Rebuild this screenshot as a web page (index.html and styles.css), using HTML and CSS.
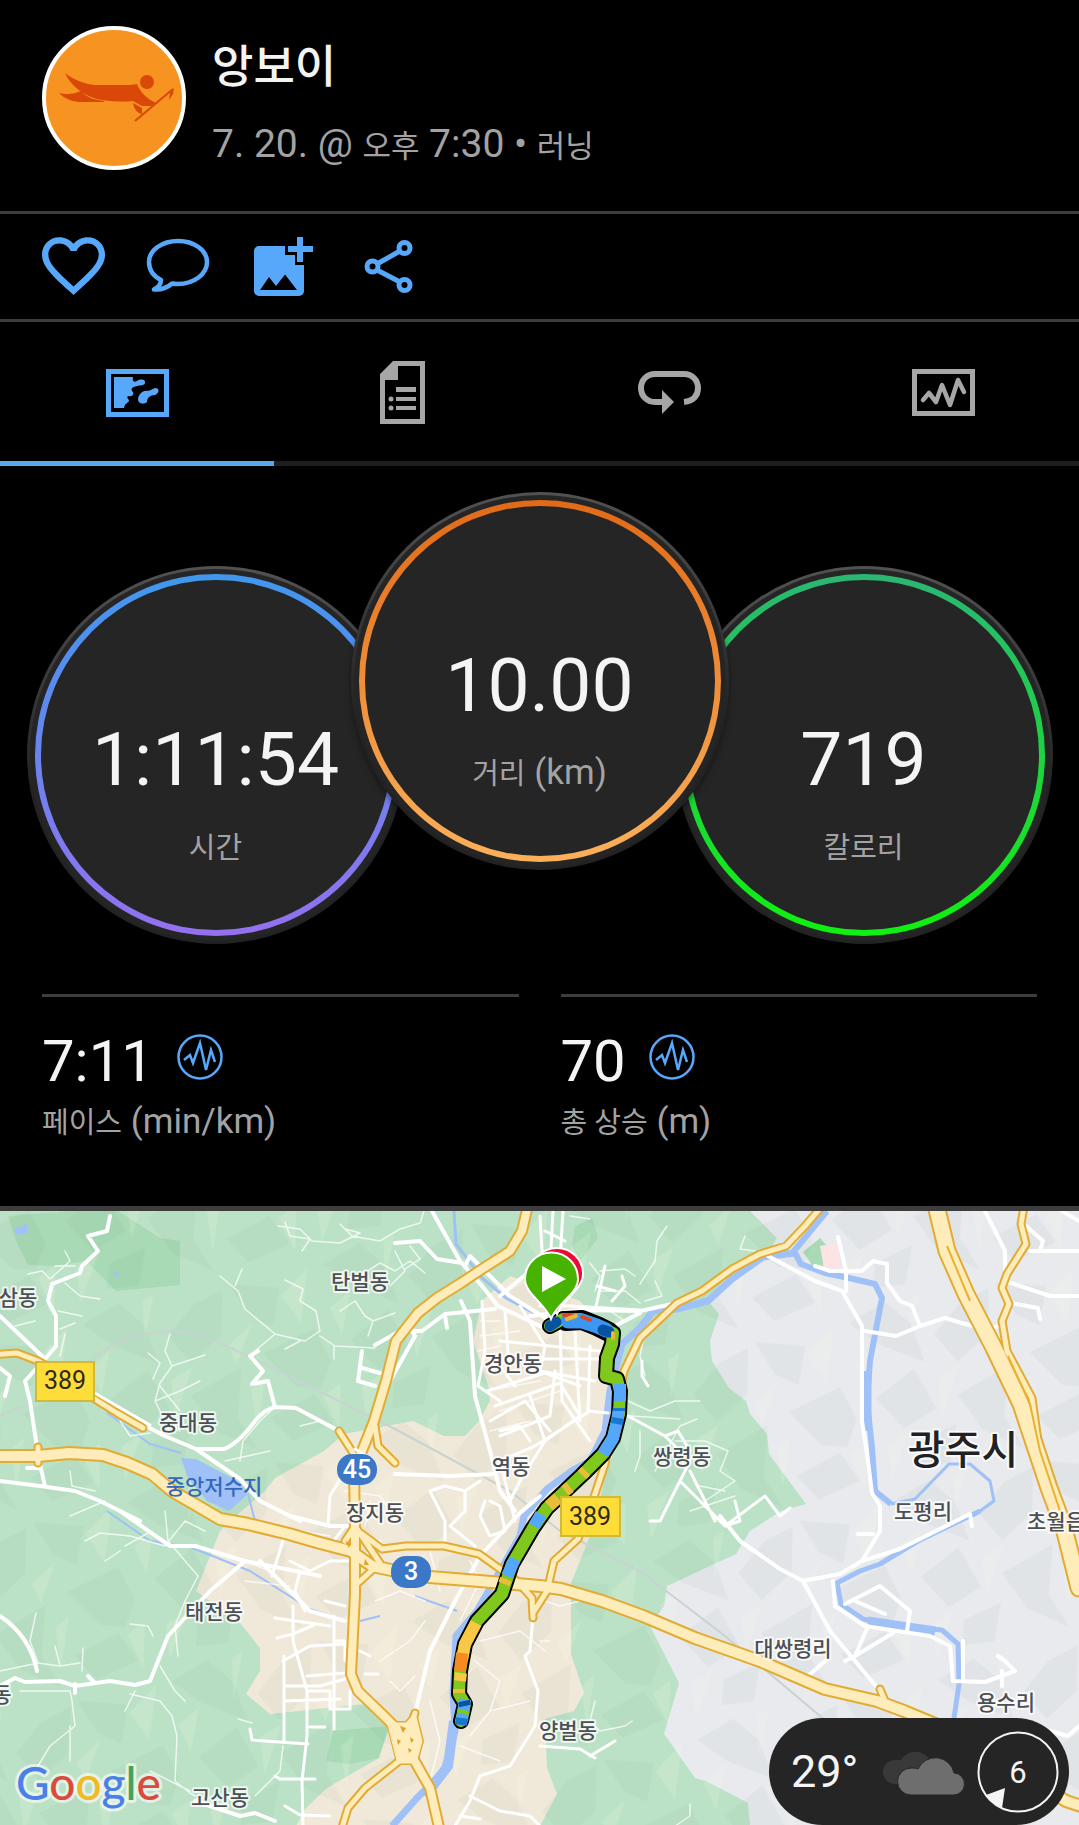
FILE: index.html
```html
<!DOCTYPE html>
<html lang="ko">
	<head>
		<meta charset="utf-8">
		<meta name="viewport" content="width=device-width, initial-scale=1">
		<title>앙보이 - 러닝</title>
		<link rel="stylesheet" href="styles.css">
	</head>
	<body>
		<!-- 사용자 정보 -->
		<header class="profile">
			<svg class="avatar" viewBox="0 0 144 144" aria-hidden="true">
				<circle cx="72" cy="72" r="70" fill="#f79421" stroke="#fff" stroke-width="4"/>
				<g fill="#d94808">
					<path d="M23 47C32 54 42 58 53 59H88L95 58C98 66 105 73 114 77L109 80H100L91 75C80 76 62 76 49 71C37 66 28 58 23 47z"/>
					<path d="M17 67C25 69 32 68 39 65C44 71 52 74 62 75V76H37C28 75 22 72 17 67z"/>
					<circle cx="105" cy="56" r="7"/>
					<path d="M91 77L100 82V88C95 87 92 83 91 77z"/>
					<path d="M128 67l4-5-1 6-4 6z"/>
				</g>
				<path d="M93 95L131 63" stroke="#d94808" stroke-width="2"/>
			</svg>
			<div class="profile-text">
				<h1>앙보이</h1>
				<p>7. 20. @ <span>오후</span> 7:30 • <span>러닝</span></p>
			</div>
		</header>

		<!-- 버튼 목록 -->
		<div class="actions">
			<button type="button" aria-label="좋아요">
				<svg viewBox="2 2 20.3 20.3"><path fill="currentColor" d="M16.5 3c-1.74 0-3.41.81-4.5 2.09C10.91 3.81 9.24 3 7.5 3 4.42 3 2 5.42 2 8.5c0 3.78 3.4 6.86 8.55 11.54L12 21.35l1.45-1.32C18.6 15.36 22 12.28 22 8.5 22 5.42 19.58 3 16.5 3zm-4.4 15.55l-.1.1-.1-.1C7.14 14.24 4 11.39 4 8.5 4 6.5 5.5 5 7.5 5c1.54 0 3.04.99 3.57 2.36h1.87C13.46 5.99 14.96 5 16.5 5c2 0 3.5 1.5 3.5 3.5 0 2.89-3.14 5.74-7.9 10.05z"/></svg>
			</button>
			<button type="button" aria-label="댓글">
				<svg viewBox="0 0 64 64"><path fill="none" stroke="currentColor" stroke-width="4.5" stroke-linejoin="round" d="M13 46C5 42 1 36 1 28C1 16 14 7 30 7S59 16 59 28S46 50 30 50c-2 0-4 0-6-.5C19 54 13 56 6 55.5C10 53 13 51 13 46z"/></svg>
			</button>
			<button type="button" aria-label="사진 추가">
				<svg viewBox="0 0 64 64" fill="currentColor">
					<path fill-rule="evenodd" d="M5 12H31V21H41V31H50V57a5 5 0 0 1-5 5H5a5 5 0 0 1-5-5V17a5 5 0 0 1 5-5zM6 56H43L31 40.5L22 52L15 43z"/>
					<path d="M43 3h6v9h10v6H49v10h-6V18H34v-6h9z"/>
				</svg>
			</button>
			<button type="button" aria-label="공유">
				<svg viewBox="0 0 64 64" fill="none" stroke="currentColor" stroke-width="5">
					<circle cx="12.5" cy="32.5" r="5.5"/><circle cx="44.5" cy="14" r="5.5"/><circle cx="44.5" cy="51" r="5.5"/>
					<path d="M17 30L40 17M17 36L40 48"/>
				</svg>
			</button>
		</div>

		<!-- 탭 -->
		<nav class="tabs">
			<a class="cur" href="#map" aria-label="지도">
				<svg width="63" height="48" viewBox="0 0 63 48">
					<rect x="2.5" y="2.5" width="58" height="43" fill="none" stroke="currentColor" stroke-width="5"/>
					<path fill="currentColor" d="M8 8H27C26 12 28 14 31 12C35 9 40 11 39 14C38 17 34 16 31 17C26 18 24 20 27 23C28 26 26 28 22 27C20 29 23 30 23 32C22 34 19 34 18 39H8zM50 19C54 20 53 24 49 26C44 26 41 29 41 33C38 36 32 35 32 30C33 25 37 21 41 22C45 22 47 19 50 19z"/>
				</svg>
			</a>
			<a href="#stats" aria-label="통계">
				<svg width="45" height="63" viewBox="0 0 45 63" fill="currentColor">
					<path fill-rule="evenodd" d="M0 13L13 0H45V63H0zM18 5V19H5V58H40V5z"/>
					<path d="M16 26h20v5H16zM16 36h20v4H16zM16 45h20v4H16z"/>
					<circle cx="11" cy="38" r="2.5"/><circle cx="11" cy="47" r="2.5"/>
				</svg>
			</a>
			<a href="#laps" aria-label="랩">
				<svg width="63" height="44" viewBox="0 0 63 44">
					<path fill="none" stroke="currentColor" stroke-width="6" d="M46 31C55 30 60 25 60 17C60 9 54 3 46 3H17C9 3 3 9 3 17S9 31 17 31H25"/>
					<path fill="currentColor" d="M24 19L36 31L24 43z"/>
				</svg>
			</a>
			<a href="#charts" aria-label="차트">
				<svg width="63" height="47" viewBox="0 0 63 47" fill="none" stroke="currentColor" stroke-width="5">
					<path d="M2.5 2.5h58v42h-58z"/>
					<path stroke-width="4.5" stroke-linejoin="round" stroke-linecap="round" d="M11 31L17 24L24 33L30 16L38 36L46 11L52 23"/>
				</svg>
			</a>
		</nav>

		<main>
			<section class="dials">
				<div class="dial side">
					<div class="ring time"><strong>1:11:54</strong><span class="label"><span>시간</span></span></div>
				</div>
				<div class="dial center">
					<div class="ring distance"><strong>10.00</strong><span class="label"><span>거리</span> (km)</span></div>
				</div>
				<div class="dial side">
					<div class="ring calorie"><strong>719</strong><span class="label"><span>칼로리</span></span></div>
				</div>
			</section>

			<section class="stats" id="stats">
				<div class="stat">
					<div class="stat-value">7:11
						<svg viewBox="0 0 46 46"><circle cx="23" cy="23" r="21.5"/><path d="M7 26L13 21L16 29L23 9L29 36L34 16L38 28"/></svg>
					</div>
					<div class="label"><span>페이스</span> (min/km)</div>
				</div>
				<div class="stat">
					<div class="stat-value">70
						<svg viewBox="0 0 46 46"><circle cx="23" cy="23" r="21.5"/><path d="M7 26L13 21L16 29L23 9L29 36L34 16L38 28"/></svg>
					</div>
					<div class="label"><span>총 상승</span> (m)</div>
				</div>
			</section>

			<!-- 지도 -->
			<section class="map" id="map">
				<svg class="map-canvas" viewBox="0 1210 1079 615" role="img" aria-label="경로 지도">
					<defs>
						<pattern id="terrain" width="310" height="230" patternUnits="userSpaceOnUse" patternTransform="rotate(-14) scale(.8)">
							<g fill="#56705f" opacity=".05">
								<path d="M10 20L60 5L85 40L40 55zM110 60L150 30L175 75L130 100zM200 15L260 35L240 80L215 60zM20 120L75 95L90 150L45 165zM120 140L190 120L170 180L140 190zM220 110L290 95L300 140L250 160zM60 185L110 175L90 220L50 215zM210 190L270 175L285 215L230 225z"/>
								<path d="M40 55L85 40L90 90zM150 30L190 20L175 75zM250 160L300 140L280 170zM140 190L170 180L185 225z"/>
							</g>
							<g fill="#fffbe0" opacity=".15">
								<path d="M90 10L105 5L80 60zM180 90L215 70L185 115zM5 75L35 60L12 110zM100 115L130 105L95 160zM260 45L300 20L275 85zM195 150L215 140L190 200zM20 180L50 170L15 222zM280 180L305 170L290 225z"/>
							</g>
						</pattern>
					</defs>

					<!-- 지형 -->
					<path fill="#e8eaed" d="M0 1210H1079V1825H0z"/>
					<path fill="#bbe2c6" d="M0 1210H750L777 1237L767 1253L746 1267L726 1280L708 1300L719 1313L710 1340L712 1360L729 1387L746 1400L750 1413L767 1433L769 1453L806 1503L781 1510L750 1530L736 1553L667 1585L664 1605L650 1625L679 1682L664 1733L695 1777L708 1781L748 1802L750 1825H0z"/>
					<path fill="#a8dab5" d="M8 1215L70 1210H118L160 1237L180 1240V1284L116 1290L86 1260L54 1265L28 1264L16 1240zM575 1225L592 1217L598 1237L580 1260L572 1245zM803 1251L820 1237L827 1245L823 1266L812 1264z"/>
					<path fill="#a8dab5" d="M333 1730L389 1725L379 1757L350 1763L326 1760zM498 1300L530 1313L520 1323L500 1312zM540 1515L572 1525L588 1540L560 1530zM427 1808L435 1805L434 1825H427z"/>
					<path fill="#f0e9d9" d="M510 1275L482 1300L473 1340L489 1387L490 1400L479 1420L465 1435H444L413 1420L344 1433L324 1450L275 1477L265 1490L238 1513L220 1530L196 1590L241 1623L260 1647V1670L246 1693L270 1713L365 1703L389 1727L379 1757L327 1787L306 1807L296 1825H540L557 1793L547 1767L545 1718L574 1710L584 1692L571 1653V1582L588 1540L600 1500L612 1440L618 1370L622 1350L580 1300L540 1285z"/>
					<path fill="#fce4e4" d="M820 1245L838 1242L840 1267H824z"/>
					<path fill="url(#terrain)" d="M0 1210H1079V1825H0z"/>
					<path class="rail" d="M0 1415L60 1390L93 1357Q130 1330 175 1330Q200 1332 248 1355L395 1428L510 1490L560 1530L640 1570L725 1635L826 1720"/>

					<!-- 물 -->
					<g class="water">
						<path d="M827 1210L794 1250L801 1263L825 1272L849 1277L875 1283L882 1297L877 1323L870 1360L867 1400L872 1447L875 1490L891 1503" stroke-width="6"/>
						<path d="M867 1370V1430" stroke-width="9"/>
						<path d="M891 1503L915 1498L949 1463L970 1463L990 1480L994 1500L973 1515" stroke-width="3"/>
						<path d="M980 1510L918 1540L880 1563L860 1570L837 1582L841 1603L863 1618L901 1625L942 1629L958 1643L959 1683L954 1717" stroke-width="5"/>
						<path d="M868 1620L901 1625L935 1630" stroke-width="9"/>
						<path d="M794 1252L763 1256L732 1278L708 1300L677 1308L653 1310L640 1327L622 1343L610 1390L605 1430L590 1460L573 1469L547 1488L524 1515L520 1535L477 1610L456 1635L453 1690L455 1730L444 1770L417 1797L392 1825" stroke-width="7"/>
						<path d="M454 1720L448 1765L425 1795" stroke-width="10"/>
						<path d="M454 1210L456 1243L482 1277L506 1297L540 1315" stroke-width="3"/>
						<path d="M107 1412L150 1443L181 1452M248 1493L255 1520M107 1510L150 1540L190 1546L250 1570L310 1608L345 1620M415 1595L457 1610M360 1620L380 1615" stroke-width="2"/>
						<path class="lake" d="M181 1457L196 1458L238 1480L248 1493L229 1510L207 1500L188 1477zM14 1228L27 1223V1232L17 1234zM113 1267L120 1278L115 1275z"/>
					</g>

					<!-- 골목길 -->
					<g class="minor">
						<path d="M285 1221L290 1235L310 1238L302 1250M278 1225L300 1228L312 1240L340 1242L360 1232L345 1228M340 1223L352 1235L380 1240L400 1228L420 1222L424 1210M360 1275L380 1262L395 1270L410 1260L425 1272M395 1250L405 1270L390 1285M410 1245L420 1258L405 1268"/>
						<path d="M220 1275L238 1290L245 1308L275 1333L305 1340L320 1330L316 1310L300 1300L303 1288L285 1279M242 1268L235 1285M275 1333L255 1350M320 1335L335 1345L375 1347M340 1310L355 1300L365 1315L373 1320L395 1312M373 1320L368 1335M334 1345V1358M285 1348L300 1340"/>
						<path d="M28 1273L42 1270L50 1278L70 1260L65 1250M55 1265L75 1265M65 1282L80 1295L100 1298M58 1310L82 1315M60 1328L75 1322M65 1333L60 1355M15 1325L35 1320"/>
						<path d="M170 1333L165 1350L172 1365L160 1382L155 1400L165 1420M148 1352L160 1362L153 1378M172 1365L205 1354M155 1400L180 1390L200 1380M160 1385L180 1410M165 1420L180 1430M275 1406L260 1420L243 1440L240 1460M225 1460L270 1450M300 1425L320 1420M120 1420L130 1435L150 1432"/>
						<path d="M70 1470L72 1485L95 1490M70 1515L105 1500M85 1540L100 1532L130 1535L165 1545L185 1520L205 1530M165 1510L168 1540L198 1575L185 1600L175 1625L178 1655M130 1623L148 1625L153 1635M120 1550L105 1560M125 1545L148 1532"/>
						<path d="M0 1670L38 1662L60 1665L80 1662M38 1662L30 1640L36 1612M55 1645L60 1665M83 1647L82 1670M20 1690L70 1690L72 1700L75 1725L50 1745L38 1765M70 1725L70 1760M130 1693L160 1700L172 1715L177 1735L175 1780L190 1792L195 1795M135 1690L125 1710M160 1665L175 1690L185 1700M150 1770L190 1790M283 1745L280 1770L255 1795M238 1718L252 1722"/>
						<path d="M590 1262L600 1275L595 1290M600 1270L625 1268L635 1275M640 1283L655 1260L657 1240L667 1225M655 1280L662 1295L645 1300M745 1235L740 1248L755 1250M570 1215L590 1218M600 1290H625L640 1302M610 1310L625 1320"/>
						<path d="M643 1340L640 1355L645 1375M628 1400L650 1410L675 1400L700 1400M630 1415L680 1418M640 1430L640 1455L635 1470M655 1470L680 1425L697 1418M675 1440L705 1440L728 1450L720 1470L735 1480L705 1500L712 1515M690 1510L735 1495M700 1485L725 1490"/>
						<path d="M545 1600L560 1605L580 1600M540 1640L550 1640M595 1700L590 1720L600 1730L625 1725L632 1720M690 1803V1815L675 1825"/>
						<path d="M480 1320L500 1320M480 1335L520 1330M478 1350L500 1345M485 1390L540 1380M500 1410L560 1390M490 1430L530 1420M345 1490L380 1495L390 1510M370 1500L365 1525M300 1530L330 1535M230 1555L270 1570M245 1580L290 1585M375 1600L400 1590L425 1600M380 1660L410 1640L425 1620M390 1680L400 1690L415 1675M430 1550L440 1590M470 1560L480 1580L460 1620M480 1640L520 1630L545 1650M475 1660L500 1680L490 1710L470 1735M490 1710L530 1700M430 1700L440 1740L430 1780M460 1745L500 1760"/>
					</g>
					<g class="local">
						<path d="M482 1300L485 1350L478 1385L500 1400M505 1310L509 1365M520 1305L545 1345L540 1370M560 1320L562 1400L590 1440M575 1330L580 1420M590 1345L588 1410L608 1412M500 1340L600 1350M545 1358H600M540 1370L595 1380M487 1390L545 1372L580 1385M495 1405L560 1382L580 1415L545 1440L520 1480L510 1500M490 1420L525 1400L550 1430M500 1430L520 1425L530 1440M515 1385L500 1365L510 1355M555 1370L550 1415L500 1435M530 1395L545 1440M590 1410L535 1445L500 1460"/>
						<path d="M345 1470L330 1495L328 1525M285 1533L272 1575M300 1570L295 1590L305 1610M290 1560L310 1570L330 1560H350M330 1545L345 1525M275 1617L330 1625M277 1637L293 1633L314 1624M283 1660L310 1645L345 1643M284 1655V1740M293 1605V1640L307 1690V1735L302 1780L303 1825M334 1615V1728M284 1685H320L345 1678M284 1700L340 1698M307 1675L345 1672M308 1690H330V1708H350V1690M250 1728L252 1739L308 1743M310 1726H325M275 1775L280 1778L315 1778M285 1805L300 1814L330 1815M334 1640H345V1660M325 1600L345 1605M365 1673H378M360 1650L370 1655"/>
						<path d="M435 1500L430 1490L445 1485L465 1490L480 1480M435 1500L445 1520V1540M465 1490V1510L450 1525L475 1545M485 1500L480 1515L490 1535L505 1530L500 1505L490 1500M500 1460L515 1520"/>
						<path d="M605 1265L595 1310M612 1300L625 1285L622 1275M540 1305H570L640 1309M597 1285L615 1290M540 1215L545 1300M553 1210L550 1265M563 1210L560 1260M545 1230L565 1240M642 1360V1375L648 1385"/>
						<path d="M628 1415L665 1435L690 1460L680 1480L725 1525L740 1520L735 1500M680 1480L660 1520L650 1520M665 1435L678 1430L690 1450M725 1525L765 1495L780 1515L790 1507M690 1470L715 1520"/>
						<path d="M533 1615L530 1650L525 1655L538 1690L535 1725L510 1765L480 1775L470 1800L455 1825M540 1745L580 1748L595 1757M590 1755L615 1740M470 1795L500 1810L530 1815L540 1825M460 1815L480 1818M380 1540L365 1555"/>
					</g>

					<!-- 큰길 -->
					<g class="street">
						<path d="M110 1215L107 1230L88 1235L98 1250L82 1265L80 1272L52 1283L48 1300L56 1315V1345L45 1358M0 1315L45 1358M45 1358L25 1380L30 1400L36 1440L38 1455L45 1485M0 1480L40 1485L75 1490L100 1500L140 1520M0 1367L10 1375L5 1395M27 1467H38"/>
						<path d="M93 1395L117 1410L165 1435L196 1448H224Q238 1443 255 1420Q265 1408 275 1406L296 1407L339 1430M275 1406L268 1380L252 1383L263 1370L250 1355L258 1350M196 1448L240 1478L260 1500L300 1520M395 1473L450 1475L495 1473"/>
						<path d="M432 1210L460 1260L482 1285L498 1305L540 1325L570 1322M395 1242L420 1240L437 1258L462 1262M465 1265L470 1255L510 1295L550 1320M500 1295L530 1270M375 1344L400 1330L422 1330L445 1313L495 1308M362 1350L358 1380L375 1385M362 1367L380 1372M390 1380L415 1335L410 1325M445 1315L447 1327M461 1300L470 1320L475 1395L490 1450L500 1490L515 1510"/>
						<path d="M120 1510L170 1545H195L245 1560L320 1575M290 1515L330 1525L350 1525M245 1560L210 1590L168 1635L150 1680L135 1684L110 1680L75 1685L60 1680L25 1681L15 1677L0 1685M0 1615Q30 1635 37 1670M88 1675L95 1682M75 1683V1692M260 1560L290 1590L310 1610L345 1620"/>
						<path d="M540 1495L520 1512L480 1555L455 1600L430 1650L418 1700L412 1725M195 1800L240 1815L255 1812L275 1820M530 1315L580 1309L640 1310L677 1302M615 1325L640 1312M610 1455L600 1480"/>
						<path d="M768 1255L815 1280L842 1290L862 1325V1420L868 1460L872 1492L880 1505V1530L862 1560L840 1573L803 1580L780 1568L740 1540L720 1515M803 1580L830 1630L880 1690M838 1236L846 1270V1290M815 1265L830 1270H862L873 1260L887 1263V1282L900 1300L912 1305M912 1305L920 1325L896 1335L865 1330M920 1325L945 1317L972 1325"/>
						<path d="M985 1210L1005 1250V1280L1050 1295H1079M1062 1210L1079 1220M1030 1250H1079M1010 1302L1038 1307L1040 1318M1026 1225L1043 1240L1040 1250M995 1326H1003M858 1533H873M862 1560L900 1548L970 1513L972 1525M833 1580L835 1605L865 1625L930 1635L950 1645L953 1680L985 1681L1015 1670L1005 1660L998 1655M963 1640V1680M1002 1670V1685M845 1603L880 1585L910 1610L907 1630M855 1600L885 1613M868 1625L855 1655L845 1660M893 1632L855 1655M825 1660L808 1675M1050 1730L1068 1735L1079 1725"/>
					</g>

					<!-- 간선도로 -->
					<g class="highway-edge">
						<path d="M-9 1455H38L69 1452L103 1454L127 1462L152 1473L172 1490L220 1518L248 1523L289 1533L320 1542L351 1550L372 1565L396 1570L430 1576L540 1585L561 1588L602 1600L643 1615L695 1637L760 1660L825 1688L877 1700L904 1710L952 1730L1066 1800L1090 1808" stroke-width="14"/>
						<path d="M529 1200L522 1230L510 1250L482 1268L461 1282L437 1297L418 1312L396 1340L386 1380L374 1420L362 1450L354 1467L355 1530V1593L351 1673L358 1690L386 1717L406 1737L413 1757L430 1787L441 1835" stroke-width="12"/>
						<path d="M406 1737L403 1757L365 1787L348 1807L341 1830M375 1425L378 1445L395 1462M339 1430L355 1455M362 1533L382 1548L406 1545H444L479 1553L517 1580L532 1597L533 1617M533 1612L547 1590L554 1560L578 1538L595 1493L605 1463L624 1370L640 1337L677 1302L702 1290L732 1268L760 1253L786 1245L805 1225L823 1204M-9 1354L17 1352L38 1360L60 1372L93 1397L117 1412L143 1427M1025 1200L1021 1223L1026 1243L1007 1273L1002 1287L1009 1303L1002 1320L1007 1350L1032 1397L1038 1440L1049 1480M345 1540L355 1525L380 1562L358 1582M880 1688L885 1700M38 1446V1462M415 1712L405 1740" stroke-width="9"/>
						<path d="M935 1200L947 1250L966 1293L994 1347L1021 1403L1049 1487L1064 1527L1079 1587" stroke-width="19"/>
						<path d="M388 1722L406 1722L415 1712L422 1740L416 1762L398 1762z" stroke-width="4" fill="#e2ac33"/>
					</g>
					<g class="highway">
						<path d="M-9 1455H38L69 1452L103 1454L127 1462L152 1473L172 1490L220 1518L248 1523L289 1533L320 1542L351 1550L372 1565L396 1570L430 1576L540 1585L561 1588L602 1600L643 1615L695 1637L760 1660L825 1688L877 1700L904 1710L952 1730L1066 1800L1090 1808" stroke-width="10"/>
						<path d="M529 1200L522 1230L510 1250L482 1268L461 1282L437 1297L418 1312L396 1340L386 1380L374 1420L362 1450L354 1467L355 1530V1593L351 1673L358 1690L386 1717L406 1737L413 1757L430 1787L441 1835" stroke-width="8"/>
						<path d="M406 1737L403 1757L365 1787L348 1807L341 1830M375 1425L378 1445L395 1462M339 1430L355 1455M362 1533L382 1548L406 1545H444L479 1553L517 1580L532 1597L533 1617M533 1612L547 1590L554 1560L578 1538L595 1493L605 1463L624 1370L640 1337L677 1302L702 1290L732 1268L760 1253L786 1245L805 1225L823 1204M-9 1354L17 1352L38 1360L60 1372L93 1397L117 1412L143 1427M1025 1200L1021 1223L1026 1243L1007 1273L1002 1287L1009 1303L1002 1320L1007 1350L1032 1397L1038 1440L1049 1480M345 1540L355 1525L380 1562L358 1582M880 1688L885 1700M38 1446V1462M415 1712L405 1740" stroke-width="5"/>
						<path d="M935 1200L947 1250L966 1293L994 1347L1021 1403L1049 1487L1064 1527L1079 1587" stroke-width="15"/>
						<path d="M388 1722L406 1722L415 1712L422 1740L416 1762L398 1762z" stroke-width="1" fill="#feecba"/>
					</g>
					<path fill="none" stroke="#eab12f" stroke-width="2" d="M947 1245L970 1300M1008 1355L1030 1403L1040 1450L1060 1510"/>
					<path fill="#e0a32a" d="M400 1725l6 2-3 5zM397 1738l4 2-3 4zM410 1736l4 3-3 3zM408 1747l4 2-3 3zM345 1540l5 3-1 4zM365 1558l4 6h-5z"/>
					<path class="road-end" d="M93 1391L117 1405L150 1424M355 1448L372 1458"/>

					<!-- 경로 -->
					<g class="route">
						<path stroke="#000" stroke-width="16" d="M550 1325L563 1318L580 1318L597 1324L613 1332L612 1343L607 1357L606 1375L617 1378L620 1390L619 1413L613 1437L603 1453L583 1473L547 1507L533 1527L512 1563L502 1593L477 1620L465 1643L460 1670L459 1693L465 1703L461 1720"/>
						<path stroke="#000" stroke-width="20" d="M566 1320L582 1319L597 1325L609 1331"/>
						<path stroke="#80c91c" stroke-width="12" d="M550 1325L563 1318L580 1318L597 1324L613 1332L612 1343L607 1357L606 1375L617 1378L620 1390L619 1413L613 1437L603 1453L583 1473L547 1507L533 1527L512 1563L502 1593L477 1620L465 1643L460 1670L459 1693L465 1703L461 1720"/>
						<path stroke="#3c96f2" stroke-width="15" d="M568 1320L582 1320L597 1325L606 1329"/>
						<path stroke="#07539f" stroke-width="11" d="M550 1325L556 1321M603 1329L609 1331"/>
						<path stroke="#d94a24" stroke-width="4" d="M564 1314L572 1314M582 1316L590 1319"/>
						<path stroke="#e9b735" stroke-width="4" d="M567 1318L576 1315M613 1332L613 1337"/>
						<g stroke-linecap="butt" stroke-width="12">
							<path stroke="#54a7fb" d="M620 1383V1400M619 1407L617 1420L613 1437L603 1453M541 1513L534 1525M515 1558L507 1575M465 1698L462 1720"/>
							<path stroke="#1877ce" d="M619 1407V1410M618 1417L617 1423M462 1717L461 1724"/>
							<path stroke="#80c91c" d="M464 1709L463 1713"/>
							<path stroke="#07539f" d="M464 1700L465 1705"/>
							<path stroke="#e9bd39" d="M586 1470L582 1474M570 1486L565 1490M558 1497L549 1505M506 1578L504 1583M459 1688V1692"/>
							<path stroke="#f8c746" d="M476 1622L465 1643L462 1658M461 1672L460 1680"/>
							<path stroke="#f78b20" d="M462 1652L460 1670"/>
						</g>
					</g>

					<!-- 도로 번호 -->
					<g class="shield">
						<path d="M36 1361h58v39H36zM561 1496h59v39h-59z" fill="#ffdd38" stroke="#d2ba38" stroke-width="2"/>
						<text x="65" y="1388">389</text>
						<text x="590" y="1524">389</text>
					</g>
					<g class="shield blue">
						<rect x="337" y="1453" width="40" height="31" rx="15"/>
						<rect x="391" y="1555" width="40" height="32" rx="15"/>
						<text x="357" y="1477">45</text>
						<text x="411" y="1579">3</text>
					</g>

					<!-- 지명 -->
					<g class="place">
						<text x="360" y="1288">탄벌동</text>
						<text x="18" y="1304">삼동</text>
						<text x="513" y="1370">경안동</text>
						<text x="188" y="1429">중대동</text>
						<text x="214" y="1493" class="lake-name">중앙저수지</text>
						<text x="511" y="1473">역동</text>
						<text x="375" y="1519">장지동</text>
						<text x="682" y="1463">쌍령동</text>
						<text x="923" y="1518">도평리</text>
						<text x="1056" y="1528">초월읍</text>
						<text x="793" y="1655">대쌍령리</text>
						<text x="1006" y="1709">용수리</text>
						<text x="568" y="1737">양벌동</text>
						<text x="214" y="1618">태전동</text>
						<text x="220" y="1804">고산동</text>
						<text x="2" y="1701">동</text>
						<text x="963" y="1463" class="city">광주시</text>
					</g>

					<!-- 출발 / 도착 -->
					<g stroke="#fff" stroke-width="2">
						<path fill="#ee0a35" d="M557 1313C552 1297 531 1288 531 1273A26 26 0 0 1 583 1273C583 1288 564 1297 557 1313z"/>
						<path fill="#47b300" d="M551 1318C545 1302 525 1293 525 1278A26 26 0 0 1 578 1278C578 1293 557 1302 551 1318z"/>
					</g>
					<path fill="#fff" d="M542 1265L566 1278L542 1291z"/>

					<text class="google" x="16" y="1799"><tspan fill="#4a80e8">G</tspan><tspan fill="#da4b3c">o</tspan><tspan fill="#f2b922">o</tspan><tspan fill="#4a80e8">g</tspan><tspan fill="#43a35a">l</tspan><tspan fill="#da4b3c">e</tspan></text>
				</svg>

				<div class="weather">
					<span class="temp">29°</span>
					<svg class="cloud" viewBox="0 0 82 48" aria-label="흐림">
						<path fill="#393939" d="M12 36A12 12 0 0 1 12 12C15 12 17 12 18 12A17 17 0 0 1 47 12L30 36z"/>
						<path fill="#6e6e6e" stroke="#252525" stroke-width="1" d="M28 47A13.5 13.5 0 0 1 28 20C31 20 33 20 35 21A19 19 0 0 1 71 25A11 11 0 0 1 70 47z"/>
					</svg>
					<svg class="wind" viewBox="0 0 82 82" aria-label="바람">
						<circle cx="41" cy="41" r="39.5" fill="none" stroke="#f4f4f4" stroke-width="2"/>
						<path fill="#f4f4f4" d="M9 64L28 57L25 77Q15 73 9 64z"/>
						<text x="41" y="52">6</text>
					</svg>
				</div>
			</section>
		</main>
	</body>
</html>
```
FILE: styles.css
```css
*{
	margin: 0;
	padding: 0;
	box-sizing: border-box;
}
body{
	background: #000;
	color: #f4f4f4;
	font-family: Roboto, "Noto Sans CJK KR", sans-serif;
}
svg{
	display: block;
}
/* 사용자 정보 */
.profile{
	display: flex;
	gap: 26px;
	padding: 26px 42px 40px;
	border-bottom: 3px solid #3d3d3d;
}
.avatar{
	width: 144px;
	height: 144px;
	flex: none;
}
.profile-text h1{
	font-size: 45px;
	line-height: 84px;
	font-weight: 500;
}
.profile-text p{
	margin-top: 10px;
	font-size: 39px;
	line-height: 48px;
	color: #a3a3a3;
}
.profile-text p span{
	font-size: 31px;
}
/* 버튼 */
.actions{
	display: flex;
	gap: 42px;
	padding: 20px 42px 21px;
	border-bottom: 3px solid #3d3d3d;
}
.actions button{
	width: 64px;
	height: 64px;
	border: none;
	background: none;
	color: #57a8fb;
	cursor: pointer;
}
.actions svg{
	width: 64px;
	height: 64px;
	overflow: visible;
}
/* 탭 */
.tabs{
	display: grid;
	grid-template-columns: 274fr 257fr 276fr 272fr;
	height: 144px;
}
.tabs a{
	display: flex;
	align-items: center;
	justify-content: center;
	padding-top: 2px;
	color: #a6a6a6;
	border-bottom: 5px solid #1e1e1e;
}
.tabs a.cur{
	color: #57a8fb;
	border-color: #5ba4ee;
}
/* 원형 기록 */
.dials{
	display: flex;
	justify-content: center;
	padding: 26px 0 50px;
}
.dial{
	width: 378px;
	height: 378px;
	flex: none;
	padding: 5px;
	border: 3px solid transparent;
	border-radius: 50%;
	background: linear-gradient(#252525, #252525) padding-box, linear-gradient(#525252, #222 60%) border-box;
}
.dial.side{
	margin-top: 74px;
}
.dial.center{
	position: relative;
	margin: 0 -54px;
	box-shadow: 0 4px 6px rgba(0,0,0,.4);
}
.ring{
	height: 100%;
	padding-top: 135px;
	border: 6px solid transparent;
	border-radius: 50%;
	text-align: center;
}
.ring.time{
	background: linear-gradient(#252525, #252525) padding-box, linear-gradient(#4097ee, #9470f0) border-box;
}
.ring.distance{
	background: linear-gradient(#252525, #252525) padding-box, linear-gradient(#e26a17, #fbb05a) border-box;
}
.ring.calorie{
	background: linear-gradient(#252525, #252525) padding-box, linear-gradient(#2bb673, #10f010) border-box;
}
.ring strong{
	display: block;
	font-size: 75px;
	line-height: 88px;
	font-weight: 400;
}
.label{
	display: block;
	font-size: 35px;
	line-height: 44px;
	color: #a3a3a3;
}
.label span{
	font-size: 29px;
}
.ring .label{
	margin-top: 22px;
}
/* 세부 기록 */
.stats{
	display: grid;
	grid-template-columns: 1fr 1fr;
	gap: 42px;
	padding: 0 42px 61px;
}
.stat{
	padding-top: 31px;
	border-top: 3px solid #3d3d3d;
}
.stat-value{
	display: flex;
	align-items: flex-start;
	gap: 23px;
	font-size: 58px;
	line-height: 66px;
}
.stat-value svg{
	width: 46px;
	height: 46px;
	margin-top: 6px;
	fill: none;
	stroke: #57a8fb;
	stroke-width: 2.5;
}
.stat .label{
	margin-top: 6px;
}
/* 지도 */
.map{
	position: relative;
	border-top: 5px solid #3d3d3d;
	overflow: hidden;
}
.map-canvas{
	width: 100%;
	height: auto;
}
.rail{
	fill: none;
	stroke: #c9d3d0;
	stroke-width: 2;
}
.water path{
	fill: none;
	stroke: #9fc1f7;
	stroke-linejoin: round;
}
.water .lake{
	fill: #9fc1f7;
	stroke: none;
}
.minor, .local, .street, .highway, .highway-edge, .route, .road-end{
	fill: none;
	stroke: #fff;
	stroke-linejoin: round;
	stroke-linecap: round;
}
.minor{
	stroke-width: 1.5;
	opacity: .75;
}
.local{
	stroke-width: 3;
}
.street{
	stroke-width: 4;
}
.road-end{
	stroke-width: 3;
}
.highway-edge{
	stroke: #e2ac33;
}
.highway{
	stroke: #feecba;
}
.shield text{
	font-size: 25px;
	text-anchor: middle;
	fill: #2d2a1c;
}
.shield.blue{
	fill: #3b78c8;
}
.shield.blue text{
	font-weight: 500;
	fill: #fff;
}
.place{
	font-family: "Noto Sans CJK KR", sans-serif;
	font-size: 21px;
	font-weight: 500;
	text-anchor: middle;
	fill: #4c5055;
	stroke: #fff;
	stroke-opacity: .75;
	stroke-width: 4;
	stroke-linejoin: round;
	paint-order: stroke;
}
.place .lake-name{
	fill: #3468b8;
	stroke: none;
}
.place .city{
	font-size: 40px;
	fill: #202124;
}
.google{
	font-family: Lato, sans-serif;
	font-size: 46px;
	font-weight: 500;
	stroke: #fff;
	stroke-opacity: .6;
	stroke-width: 6;
	stroke-linejoin: round;
	paint-order: stroke;
}
/* 날씨 */
.weather{
	position: absolute;
	right: 10px;
	bottom: 1px;
	display: flex;
	align-items: center;
	width: 300px;
	height: 107px;
	padding: 0 10px 0 22px;
	border-radius: 54px;
	background: #252525;
}
.temp{
	font-size: 45px;
}
.cloud{
	width: 82px;
	height: 48px;
	margin: 0 12px 0 auto;
}
.wind{
	width: 82px;
	height: 82px;
}
.wind text{
	font-size: 31px;
	text-anchor: middle;
	fill: #f4f4f4;
}
```
